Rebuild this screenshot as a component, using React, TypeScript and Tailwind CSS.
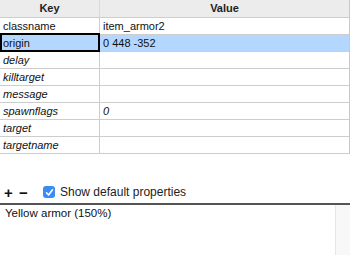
import React from "react";

interface Prop {
  key: string;
  value: string;
  isDefault?: boolean;
}

const props: Prop[] = [
  { key: "classname", value: "item_armor2" },
  { key: "origin", value: "0 448 -352" },
  { key: "delay", value: "", isDefault: true },
  { key: "killtarget", value: "", isDefault: true },
  { key: "message", value: "", isDefault: true },
  { key: "spawnflags", value: "0", isDefault: true },
  { key: "target", value: "", isDefault: true },
  { key: "targetname", value: "", isDefault: true },
];

export default function App() {
  const selected = "origin";

  return (
    <div className="flex h-[255px] w-[350px] flex-col overflow-hidden bg-white font-['Liberation_Sans',Arial,sans-serif] text-[11px] text-[#111]">
      {/* property table */}
      <div className="w-[350px] border-r border-[#c9c9c9]">
        <div className="flex h-[18px] border-b border-[#cdcdcd] bg-[#ececec] font-bold leading-[17px] text-[#222]">
          <div className="w-[100px] border-r border-[#d9d9d9] text-center">Key</div>
          <div className="flex-1 text-center">Value</div>
        </div>
        {props.map((p) => {
          const isSel = p.key === selected;
          return (
            <div
              key={p.key}
              className={`flex h-[17px] border-b border-[#cdcdcd] leading-[16px] ${isSel ? "bg-[#b3d7ff]" : ""} ${p.isDefault ? "italic" : ""}`}
            >
              <div className="relative w-[100px] border-r border-[#cdcdcd] pl-[3px]">
                {isSel && <div className="absolute -top-[2px] -bottom-[1px] left-0 right-[-1px] border-2 border-black" />}
                {p.key}
              </div>
              <div className="flex-1 pl-[3px]">{p.value}</div>
            </div>
          );
        })}
      </div>

      <div className="flex-1" />

      {/* toolbar */}
      <div className="flex h-[22px] items-center pl-[4px] text-[12px]">
        <span className="w-[15px] text-[15px] font-bold leading-none">+</span>
        <span className="w-[24px] text-[15px] font-bold leading-none">−</span>
        <span className="flex h-[12px] w-[12px] items-center justify-center rounded-[3px] bg-[#3b8cf0]">
          <svg width="9" height="9" viewBox="0 0 9 9">
            <path d="M1.5 4.8 L3.6 7 L7.5 1.8" fill="none" stroke="white" strokeWidth="1.6" strokeLinecap="round" strokeLinejoin="round" />
          </svg>
        </span>
        <span className="ml-[5px] text-[#222]">Show default properties</span>
      </div>

      {/* description */}
      <div className="flex h-[52px] border-t-2 border-[#555]">
        <div className="flex-1 pl-[5px] pt-[1px] text-[11.5px] leading-[15px] text-[#111]">Yellow armor (150%)</div>
        <div className="w-[15px] border-l border-[#e6e6e6] bg-[#f8f8f8]" />
      </div>
    </div>
  );
}
